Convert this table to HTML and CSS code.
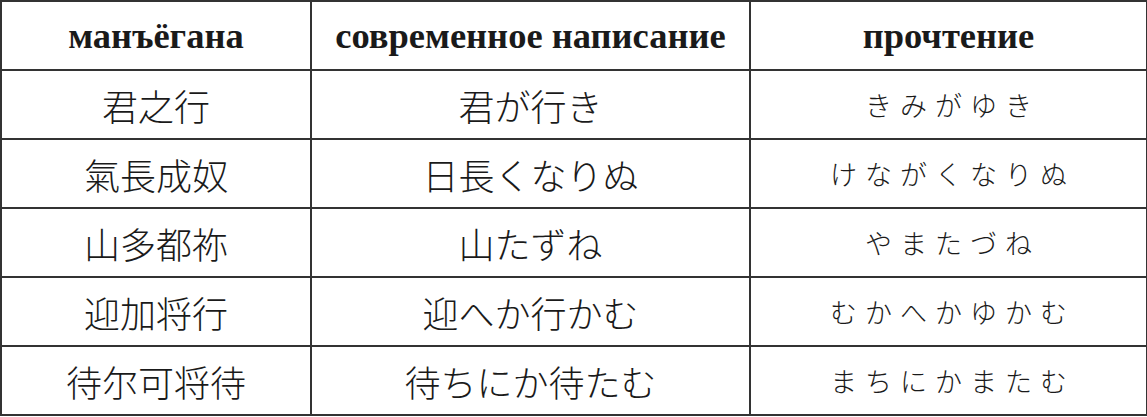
FILE: index.html
```html
<!DOCTYPE html>
<html lang="ru">
<head>
<meta charset="utf-8">
<link rel="stylesheet" href="styles.css">
</head>
<body>
<table class="grid">
  <colgroup>
    <col class="c1">
    <col class="c2">
    <col class="c3">
  </colgroup>
  <thead>
    <tr>
      <th>манъёгана</th>
      <th>современное написание</th>
      <th>прочтение</th>
    </tr>
  </thead>
  <tbody>
    <tr><td class="jp">君之行</td><td class="jp">君が行き</td><td class="kana">きみがゆき</td></tr>
    <tr><td class="jp">氣長成奴</td><td class="jp">日長くなりぬ</td><td class="kana">けながくなりぬ</td></tr>
    <tr><td class="jp">山多都祢</td><td class="jp">山たずね</td><td class="kana">やまたづね</td></tr>
    <tr><td class="jp">迎加将行</td><td class="jp">迎へか行かむ</td><td class="kana">むかへかゆかむ</td></tr>
    <tr><td class="jp">待尔可将待</td><td class="jp">待ちにか待たむ</td><td class="kana">まちにかまたむ</td></tr>
  </tbody>
</table>
</body>
</html>
```
FILE: styles.css
```css
html, body {
  margin: 0;
  padding: 0;
  background: #ffffff;
}
.grid {
  border-collapse: collapse;
  table-layout: fixed;
  width: 1146px;
  color: #1a1a1a;
}
.c1 { width: 310px; }
.c2 { width: 439px; }
.c3 { width: 397px; }
.grid th,
.grid td {
  border: 2px solid #333333;
  height: 69px;
  padding: 0;
  text-align: center;
  vertical-align: middle;
  box-sizing: border-box;
}
.grid th {
  font-family: "Liberation Serif", "Times New Roman", serif;
  font-weight: bold;
  font-size: 36.5px;
}
.jp {
  font-family: "Noto Sans CJK JP", "Noto Sans CJK SC", sans-serif;
  font-weight: 300;
  font-size: 36px;
}
.kana {
  font-family: "Noto Sans CJK JP", "Noto Sans CJK SC", sans-serif;
  font-weight: 300;
  font-size: 27px;
  letter-spacing: 8px;
  text-indent: 8px;
}
```
